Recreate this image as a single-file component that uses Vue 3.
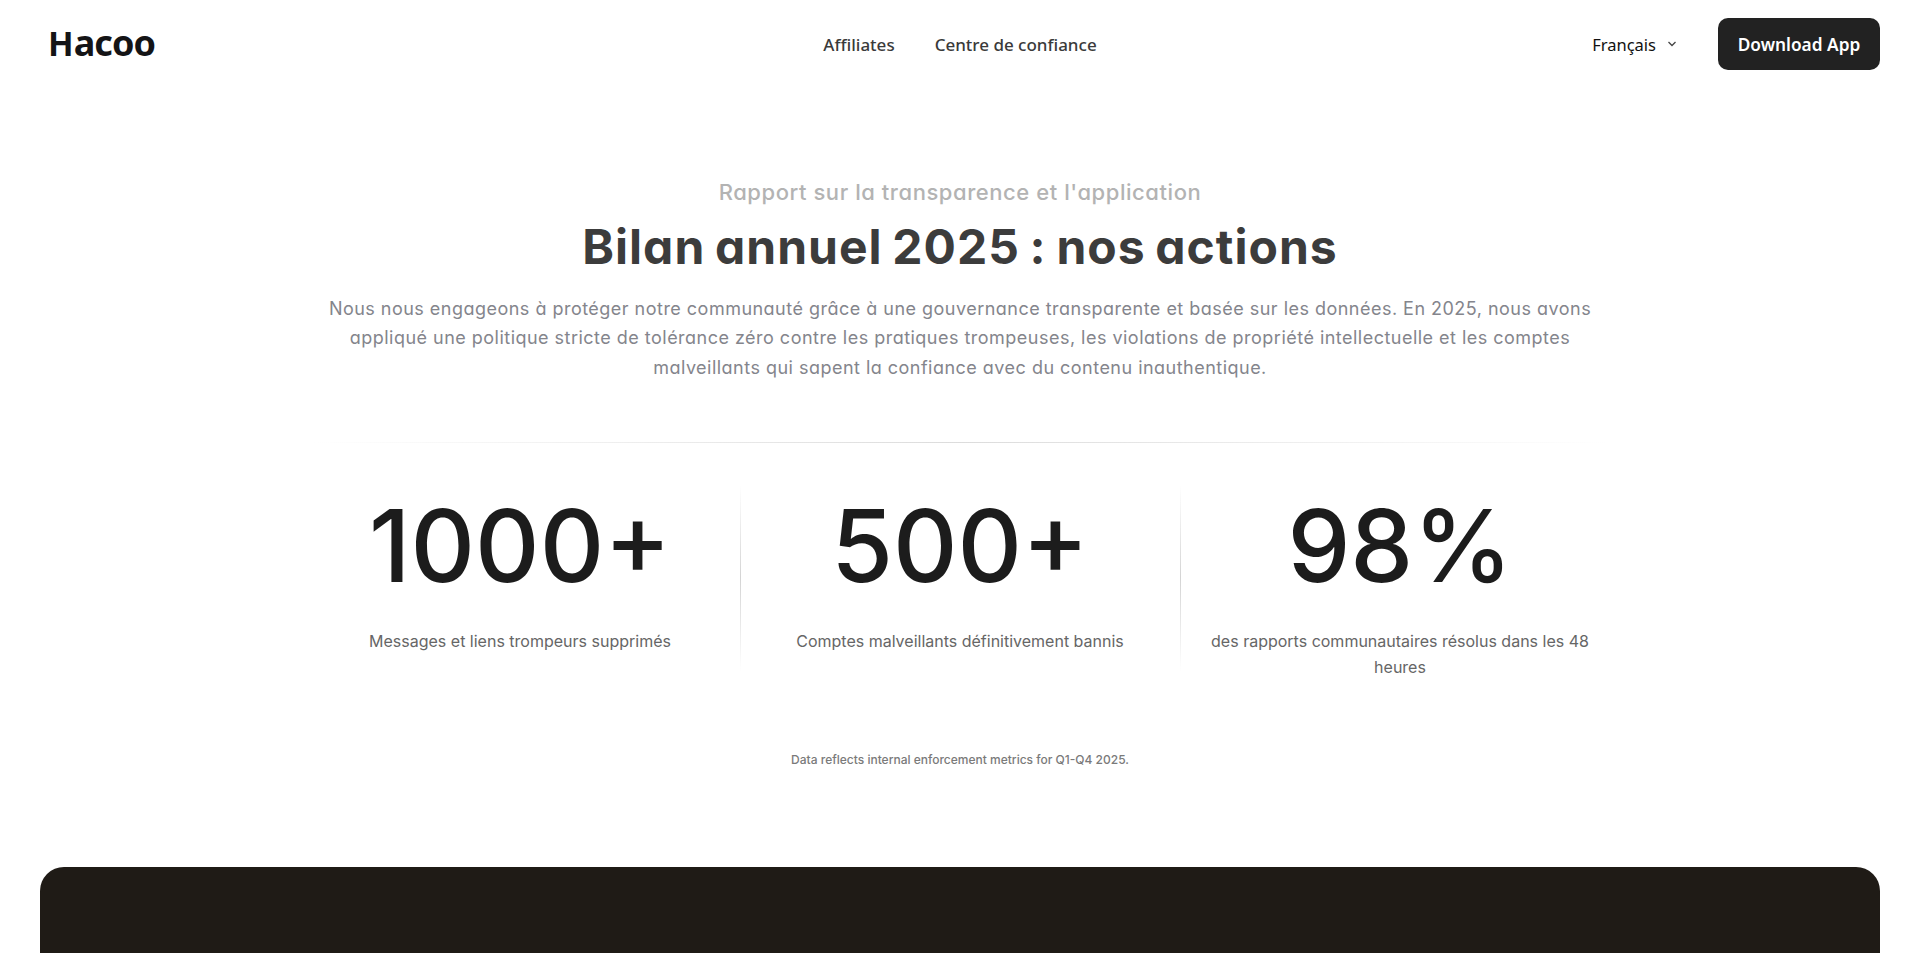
<template>
  <div class="page">
    <header class="header">
      <a class="logo"><span class="logo-cap">H</span><span class="logo-rest">acoo</span></a>
      <nav class="nav">
        <a v-for="link in links" :key="link" class="nav-link">{{ link }}</a>
      </nav>
      <div class="actions">
        <button class="lang">
          <span>Français</span>
          <svg width="10" height="6" viewBox="0 0 10 6" fill="none">
            <path d="M1.5 1L5 4.5L8.5 1" stroke="#444" stroke-width="1.3" />
          </svg>
        </button>
        <button class="download">Download App</button>
      </div>
    </header>

    <main>
      <section class="report">
        <p class="eyebrow">Rapport sur la transparence et l'application</p>
        <h1 class="title">Bilan annuel 2025 : nos actions</h1>
        <p class="intro">
          <span v-for="(line, i) in intro" :key="i" class="intro-line">{{ line }}</span>
        </p>

        <div class="rule"></div>

        <div class="stats">
          <div v-for="stat in stats" :key="stat.value" class="stat">
            <div class="stat-value">{{ stat.value }}</div>
            <div class="stat-label">{{ stat.label }}</div>
          </div>
        </div>

        <p class="note">Data reflects internal enforcement metrics for Q1-Q4 2025.</p>
      </section>

      <section class="dark-panel"></section>
    </main>
  </div>
</template>

<script setup>
const links = ['Affiliates', 'Centre de confiance']

const intro = [
  'Nous nous engageons à protéger notre communauté grâce à une gouvernance transparente et basée sur les données. En 2025, nous avons',
  'appliqué une politique stricte de tolérance zéro contre les pratiques trompeuses, les violations de propriété intellectuelle et les comptes',
  'malveillants qui sapent la confiance avec du contenu inauthentique.'
]

const stats = [
  { value: '1000+', label: 'Messages et liens trompeurs supprimés' },
  { value: '500+', label: 'Comptes malveillants définitivement bannis' },
  { value: '98%', label: 'des rapports communautaires résolus dans les 48 heures' }
]
</script>

<style>
html, body {
  margin: 0;
  background: #fff;
  overflow: hidden;
}
</style>

<style scoped>
.page {
  height: 953px;
  overflow: hidden;
  font-family: Inter, "Liberation Sans", sans-serif;
}

p, h1 { margin: 0; }

/* Header */
.header {
  display: grid;
  grid-template-columns: 1fr auto 1fr;
  align-items: center;
  height: 88px;
  padding: 0 40px;
  box-sizing: border-box;
  font-family: "Segoe UI", "Noto Sans", sans-serif;
}

.logo {
  display: flex;
  align-items: baseline;
  padding: 0 0 3px 8px;
  font-weight: 700;
  color: #141416;
  line-height: 48px;
}
.logo-cap { font-size: 33.5px; }
.logo-rest { font-size: 36px; letter-spacing: -0.9px; }

.nav { display: flex; gap: 40px; }
.nav-link {
  font-size: 17px;
  font-weight: 500;
  color: #3a3a3a;
}

.actions {
  display: flex;
  align-items: center;
  justify-content: flex-end;
  gap: 41px;
}

button {
  font-family: inherit;
  border: none;
  cursor: pointer;
}

.lang {
  display: flex;
  align-items: center;
  gap: 11px;
  padding: 0;
  background: none;
  font-size: 16.5px;
  color: #111;
}

.download {
  width: 162px;
  height: 52px;
  padding: 0;
  border-radius: 10px;
  background: #222;
  color: #fff;
  font-size: 17.3px;
  font-weight: 600;
}

/* Report */
.report {
  width: 1320px;
  margin: 0 auto;
  padding-top: 86px;
  text-align: center;
}

.eyebrow {
  font-size: 22px;
  line-height: 36px;
  font-weight: 500;
  letter-spacing: 0.56px;
  color: #b3b3b3;
  font-feature-settings: "cv11";
}

.title {
  margin-top: 5px;
  font-size: 48px;
  line-height: 64px;
  font-weight: 750;
  letter-spacing: 1px;
  word-spacing: -2.6px;
  color: #3c3c3c;
  font-feature-settings: "cv11";
}

.intro {
  margin-top: 15px;
  font-size: 18px;
  line-height: 29.3px;
  letter-spacing: 0.48px;
  color: #84858c;
  font-feature-settings: "cv11";
}
.intro-line { display: block; white-space: nowrap; }

.rule {
  height: 1px;
  margin-top: 60px;
  background: linear-gradient(90deg, transparent 1%, #dcdcdc 50%, transparent 99%);
}

.stats {
  display: grid;
  grid-template-columns: repeat(3, 1fr);
  margin-top: 42px;
}

.stat {
  height: 186px;
  padding: 0 24px;
}
.stat + .stat {
  background: linear-gradient(180deg, transparent, #d4d4d4 50%, transparent) 0 0 / 1px 100% no-repeat;
}

.stat-value {
  padding-top: 11px;
  font-size: 100px;
  line-height: 100px;
  font-weight: 500;
  color: #1c1c1c;
}

.stat-label {
  margin-top: 32px;
  font-size: 16px;
  line-height: 26px;
  color: #666;
}

.note {
  margin-top: 79px;
  font-size: 12px;
  line-height: 20px;
  font-weight: 500;
  color: #7a7a7a;
}

.dark-panel {
  height: 400px;
  margin: 97px 40px 0;
  border-radius: 24px;
  background: #1f1b16;
}
</style>
